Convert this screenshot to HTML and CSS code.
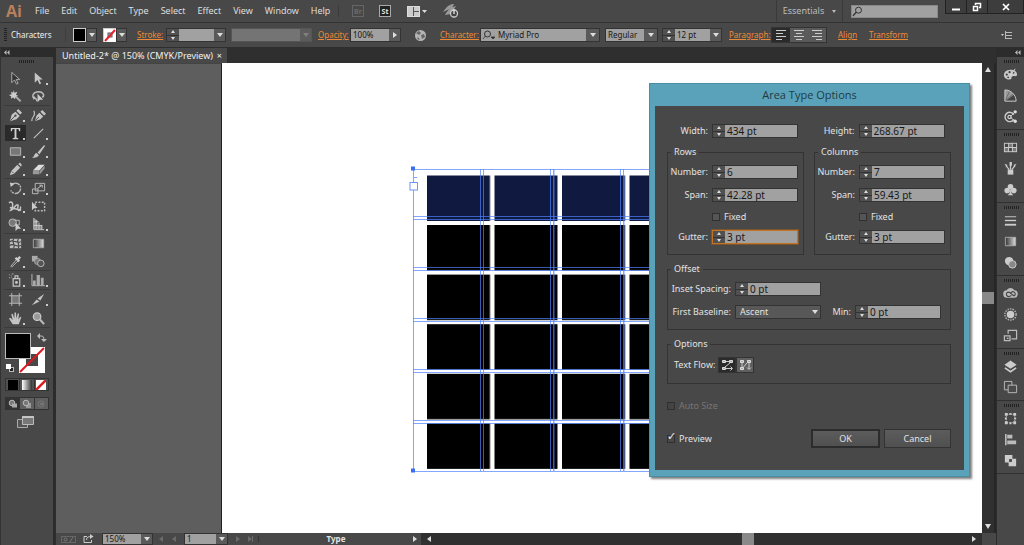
FILE: index.html
```html
<!DOCTYPE html>
<html lang="en">
<head>
<meta charset="utf-8">
<title>Untitled-2* - Area Type Options</title>
<link rel="stylesheet" href="styles.css">
</head>
<body>
<div class="app">
  <header class="menubar">
    <span class="logo">Ai</span>
    <nav class="menus">
      <a href="#">File</a><a href="#">Edit</a><a href="#">Object</a><a href="#">Type</a><a href="#">Select</a><a href="#">Effect</a><a href="#">View</a><a href="#">Window</a><a href="#">Help</a>
    </nav>
    <div class="bar-apps">
      <button class="app-chip dim">Br</button>
      <button class="app-chip">St</button>
      <button class="plain" aria-label="Arrange documents"><svg width="22" height="13" viewBox="0 0 22 13"><rect x="1" y="1" width="13" height="11" fill="#ccc"/><path d="M7.500 1v11M7.500 6.500H14" stroke="#555"/><path d="M1.500 1.500h12v10h-12z" fill="none" stroke="#ddd"/><path d="M16 5h5l-2.500 3z" fill="#ddd"/></svg></button>
      <button class="plain" aria-label="GPU performance"><svg width="16" height="16" viewBox="0 0 16 16"><path d="M0 9C4 3 7 1 11 1L9 5zM2 12C5 6 9 4 13 3L8 11z" fill="#999"/><circle cx="11" cy="10.500" r="3.500" fill="#444" stroke="#ccc" stroke-width="1.300"/><path d="M11 6v5" stroke="#ddd" stroke-width="1.400"/></svg></button>
    </div>
    <button class="workspace">Essentials<i class="tri down"></i></button>
    <label class="search"><svg width="11" height="11" viewBox="0 0 11 11"><circle cx="6.500" cy="4.200" r="3" fill="none" stroke="#333"/><path d="M4.300 6.300L1 9.800" stroke="#333" stroke-width="1.300"/></svg><input type="search" aria-label="Search"></label>
    <div class="winbuttons">
      <button aria-label="Minimize"><svg width="10" height="10" viewBox="0 0 10 10"><path d="M1 7.500h8" stroke="#fff" stroke-width="2"/></svg></button>
      <button aria-label="Restore"><svg width="10" height="10" viewBox="0 0 10 10"><path d="M3.500 3V1.500h5v4H7M1.500 4.500h4v4h-4z" fill="none" stroke="#fff" stroke-width="1.500"/></svg></button>
      <button aria-label="Close" class="wide"><svg width="10" height="10" viewBox="0 0 10 10"><path d="M2 2l6 6M8 2L2 8" stroke="#fff" stroke-width="1.700"/></svg></button>
    </div>
  </header>

  <section class="control" aria-label="Control">
    <i class="vgrip"></i>
    <span class="context">Characters</span>
    <div class="cell swatches">
      <button class="sw black" aria-label="Fill"></button><button class="dd" aria-label="Fill menu"></button>
      <button class="sw none second" aria-label="Stroke colour"><svg width="12" height="13" viewBox="0 0 12 13"><rect width="12" height="13" fill="#fff"/><rect x="4" y="4" width="4" height="4" fill="#9bb" stroke="#556"/><path d="M1 12L11 1" stroke="#e8202a" stroke-width="2"/></svg></button><button class="dd" aria-label="Stroke colour menu"></button>
    </div>
    <div class="cell stroke"><a href="#">Stroke:</a><span class="field"><span class="spin"><button aria-label="Up"></button><button aria-label="Down"></button></span><input class="w35" aria-label="Stroke weight"><button class="dd" aria-label="Stroke weights"></button></span></div>
    <div class="cell profile"><span class="field off"><input disabled class="w68" aria-label="Width profile"><button disabled class="dd" aria-label="Profiles"></button></span></div>
    <div class="cell opacity"><a href="#">Opacity:</a><span class="field"><input class="w38" value="100%" aria-label="Opacity"><button class="dd right" aria-label="Opacity slider"></button></span></div>
    <div class="cell recolor"><button class="plain" aria-label="Recolor artwork"><svg width="13" height="13" viewBox="0 0 13 13"><circle cx="6.500" cy="6.500" r="5.500" fill="#b5b5b5"/><path d="M2 4l3-2 2 2-2 2zM7 6l3-1 1 3-3 2zM4 8l2 3-3-1z" fill="#666"/></svg></button></div>
    <div class="cell char"><a href="#">Character:</a><span class="field"><span class="fontbox"><svg width="15" height="11" viewBox="0 0 15 11"><circle cx="6.500" cy="4" r="3" fill="none" stroke="#333"/><path d="M4.300 6L2 9M10 7h4l-2 2z" stroke="#333" fill="#333" stroke-width=".8"/></svg><input class="w88" value="Myriad Pro" aria-label="Font family"></span><button class="dd wide" aria-label="Fonts"></button></span></div>
    <div class="cell style"><span class="field"><input class="w38" value="Regular" aria-label="Font style"><button class="dd wide" aria-label="Styles"></button></span></div>
    <div class="cell size"><span class="field"><span class="spin"><button aria-label="Up"></button><button aria-label="Down"></button></span><input class="w35" value="12 pt" aria-label="Font size"><button class="dd" aria-label="Sizes"></button></span></div>
    <div class="cell para"><a href="#">Paragraph:</a><span class="aligns">
      <button class="on" aria-label="Align left"><svg width="12" height="12" viewBox="0 0 12 12"><path d="M1 1.500h10M1 4.500h7M1 7.500h10M1 10.500h6" stroke="#ccc"/></svg></button><button aria-label="Align center"><svg width="12" height="12" viewBox="0 0 12 12"><path d="M1 1.500h10M3 4.500h6M1 7.500h10M3 10.500h6" stroke="#ccc"/></svg></button><button aria-label="Align right"><svg width="12" height="12" viewBox="0 0 12 12"><path d="M1 1.500h10M4 4.500h7M1 7.500h10M5 10.500h6" stroke="#ccc"/></svg></button></span></div>
    <div class="cell align"><a href="#">Align</a></div>
    <div class="cell transform"><a href="#">Transform</a></div>
    <button class="plain panelmenu" aria-label="Panel menu"><svg width="12" height="10" viewBox="0 0 12 10"><path d="M0 4h3L1.500 6z" fill="#ccc"/><path d="M4.500 1v8M5 2.500h6M5 5.500h6M5 8.500h6" stroke="#bbb"/></svg></button>
  </section>

  <main class="work">
    <aside class="tools" aria-label="Tools">
      <div class="dockhead"><svg width="6" height="5" viewBox="0 0 6 5"><path d="M2.500 0v5L0 2.500zM5.500 0v5L3 2.500z" fill="#bbb"/></svg></div>
      <i class="hgrip"></i>
      <div class="toolset">
        <button aria-label="Selection"><svg viewBox="0 0 16 16"><path d="M4 1.500v11l3-3 2 4.500 1.800-.8-2-4.200h3.700z" fill="#333" stroke="#bbb" stroke-width=".9"/></svg></button>
        <button class="more" aria-label="Direct selection"><svg viewBox="0 0 16 16"><path d="M4 1.500v11l3-3 2 4.500 1.800-.8-2-4.200h3.700z" fill="#c4c4c4"/></svg></button>
        <button aria-label="Magic wand"><svg viewBox="0 0 16 16"><path d="M7 7l6.500 6" stroke="#aaa" stroke-width="2"/><path d="M6 1l1 3 3-1-1.500 3L11 7.500 8 8l-.5 3L5.500 9 3 10.500 3.500 8 1 6.500 4 5.500 3 3l2.500 1z" fill="#ccc"/></svg></button>
        <button aria-label="Lasso"><svg viewBox="0 0 16 16"><path d="M3.500 11C0 7 3 3 8 3s7 4 4 6M3 8c1 3 4 2 3 5" fill="none" stroke="#bbb" stroke-width="1.600"/><path d="M7 5v9l2.500-2.500H13z" fill="#ccc"/></svg></button>
      </div>
      <div class="toolset">
        <button class="more" aria-label="Pen"><svg viewBox="0 0 16 16"><path d="M2 14L4 7l4-3 4.500 4.500L9 12zM9 3l2-2 4 4-2 2z" fill="#c4c4c4"/><path d="M2.500 13.500l5-5" stroke="#444"/><circle cx="8" cy="8" r="1.200" fill="#444"/></svg></button>
        <button aria-label="Curvature"><svg viewBox="0 0 16 16"><path d="M4 14L6 8l3-3 4 4-3 3zM10 4l2-2 4 4-2 2z" fill="#c4c4c4"/><path d="M4.500 13.500l4-4" stroke="#444"/><path d="M1 14c-1-5 5-5 2-11" fill="none" stroke="#bbb" stroke-width="1.300"/></svg></button>
        <button class="more on" aria-label="Type"><svg viewBox="0 0 16 16"><path d="M3 2h10v3.500h-1L11 3.200H9v9.300l2 .5v1H5v-1l2-.5V3.200H5L4 5.500H3z" fill="#d0d0d0"/></svg></button>
        <button class="more" aria-label="Line segment"><svg viewBox="0 0 16 16"><path d="M3 13L13 3" stroke="#bbb" stroke-width="1.300"/></svg></button>
        <button class="more" aria-label="Rectangle"><svg viewBox="0 0 16 16"><path d="M2.500 4h11v8h-11z" fill="#777" stroke="#bbb"/></svg></button>
        <button class="more" aria-label="Paintbrush"><svg viewBox="0 0 16 16"><path d="M7 9L14 1l1 1-6 9z" fill="#c4c4c4"/><path d="M1 14c3 0 2-4 5-4.500L8.500 12C6 15 3 15 1 14z" fill="#c4c4c4"/></svg></button>
        <button class="more" aria-label="Pencil"><svg viewBox="0 0 16 16"><path d="M2 14l1.500-4.500L10 3l3 3-6.500 6.500zM11 2l1-1c1-.5 3 1.500 2.500 2.500L14 5z" fill="#c4c4c4"/><path d="M4 10l2 2" stroke="#555"/></svg></button>
        <button class="more" aria-label="Eraser"><svg viewBox="0 0 16 16"><path d="M2 9l6-6h6.500L9 9z" fill="#ddd"/><path d="M2 9.500h7v3.500H2zM9.500 9.500l5-5.500v3L9.500 13z" fill="#999"/></svg></button>
      </div>
      <div class="toolset">
        <button class="more" aria-label="Rotate"><svg viewBox="0 0 16 16"><path d="M4 4a5.500 5.500 0 1 1-1 6" fill="none" stroke="#bbb" stroke-width="1.500" stroke-dasharray="9 1 2 1"/><path d="M2 1.500l5 1.500-4 3.500z" fill="#ccc"/></svg></button>
        <button class="more" aria-label="Scale"><svg viewBox="0 0 16 16"><path d="M4.500 2.500h10v8h-10zM1.500 8.500h6v5h-6z" fill="none" stroke="#bbb"/><path d="M7 8l4-3M9 4.500h3V7" stroke="#ccc" fill="none"/></svg></button>
        <button class="more" aria-label="Width"><svg viewBox="0 0 16 16"><path d="M1 4c5-3 5 4 2 8 4-1 4-6 7-6 2 0-1 5 1 6s3-3 2-4M2 9l12 3" fill="none" stroke="#c4c4c4" stroke-width="1.600"/></svg></button>
        <button aria-label="Free transform"><svg viewBox="0 0 16 16"><path d="M4.500 3.500h10v9h-10z" fill="none" stroke="#bbb" stroke-width="1.500" stroke-dasharray="2 1.500"/><path d="M1 3v9l2.500-2.500H7z" fill="#ccc"/></svg></button>
        <button class="more" aria-label="Shape builder"><svg viewBox="0 0 16 16"><circle cx="5" cy="6" r="4" fill="#777" stroke="#bbb"/><path d="M7 3.500h5v5H7" fill="none" stroke="#bbb"/><path d="M8 6v9l2.500-2.500H14z" fill="#ccc"/></svg></button>
        <button class="more" aria-label="Perspective grid"><svg viewBox="0 0 16 16"><path d="M3 1l4 3v9H3zM7 8l5 2v3H3" fill="#888"/><path d="M3 1v12.500h11M5.500 3v10M8.500 6v7M11.500 9v4M3 5h5M3 9h9" fill="none" stroke="#ccc"/></svg></button>
      </div>
      <div class="toolset">
        <button aria-label="Mesh"><svg viewBox="0 0 16 16"><path d="M2 3h12v10H2z" fill="#bbb"/><path d="M2 6c4-3 7 3 12 0M2 10c4-3 7 3 12 0M6 3c-3 4 3 6 0 10M11 3c-3 4 3 6 0 10" fill="none" stroke="#444" stroke-width="1.200"/></svg></button>
        <button aria-label="Gradient"><svg viewBox="0 0 16 16"><defs><linearGradient id="lg"><stop offset="0" stop-color="#333"/><stop offset="1" stop-color="#ddd"/></linearGradient></defs><path d="M2.500 3.500h11v9h-11z" fill="url(#lg)" stroke="#aaa"/></svg></button>
        <button class="more" aria-label="Eyedropper"><svg viewBox="0 0 16 16"><path d="M3 13L9 6l1.500 1.500L4 14z" fill="none" stroke="#bbb"/><path d="M8 4l4 4M10 6l3-3" stroke="#ccc" stroke-width="2.500"/></svg></button>
        <button aria-label="Blend"><svg viewBox="0 0 16 16"><rect x="1" y="2" width="6" height="6" fill="#aaa"/><rect x="4" y="5" width="6" height="6" rx="2" fill="#777" stroke="#aaa"/><circle cx="10.500" cy="10" r="3.500" fill="#555" stroke="#bbb"/></svg></button>
      </div>
      <div class="toolset">
        <button class="more" aria-label="Symbol sprayer"><svg viewBox="0 0 16 16"><path d="M5.500 6h7v8h-7zM7.500 3h3v3h-3z" fill="none" stroke="#c4c4c4" stroke-width="1.300"/><circle cx="9" cy="10" r="1.500" fill="#ccc"/><path d="M1 2h1M3 3h1M1 5h1M4 1h2M3 5h1" stroke="#aaa"/></svg></button>
        <button class="more" aria-label="Column graph"><svg viewBox="0 0 16 16"><path d="M2 8h3v5H2zM6 2h3.500v11H6zM10.500 5h3v8h-3z" fill="#aaa"/><path d="M1 1v12.500h14" fill="none" stroke="#bbb"/></svg></button>
      </div>
      <div class="toolset">
        <button aria-label="Artboard"><svg viewBox="0 0 16 16"><path d="M4 4h8v8H4z" fill="#777"/><path d="M4 1v14M12 1v14M1 4h14M1 12h14" stroke="#bbb"/></svg></button>
        <button class="more" aria-label="Slice"><svg viewBox="0 0 16 16"><path d="M1 14L6 8l3 2zM7 7l7-5-4 7z" fill="#c4c4c4"/></svg></button>
      </div>
      <div class="toolset">
        <button class="more" aria-label="Hand"><svg viewBox="0 0 16 16"><path d="M5 14L1 8l1.500-.7L5 9.500 3.500 3.500 5 3l1.700 5L7 1.500h1.500L9 8l1.500-5.500 1.300.5L11 9l2-3 1.200.7L11.500 14z" fill="#c4c4c4"/></svg></button>
        <button aria-label="Zoom"><svg viewBox="0 0 16 16"><circle cx="6.500" cy="6" r="4" fill="#999" stroke="#ccc" stroke-width="1.300"/><path d="M9.500 9l4.500 5" stroke="#bbb" stroke-width="2.200"/></svg></button>
      </div>
      <svg class="fillstroke" width="44" height="42" viewBox="0 0 44 42" role="img" aria-label="Fill and stroke"><path d="M14 15h26v26H14zM21 22v12h12V22z" fill="#fff" fill-rule="evenodd"/><path d="M15 40L39 16" stroke="#e01820" stroke-width="2"/><rect x=".5" y="1.500" width="25" height="25" fill="#000" stroke="#bbb"/><path d="M34 4h3q2 0 2 4" fill="none" stroke="#bbb"/><path d="M35 1v6l-3-3zM36 7h6l-3 3z" fill="#bbb"/><rect x="4.500" y="35.500" width="4" height="4" fill="#222" stroke="#bbb"/><rect x="1" y="32" width="5" height="5" fill="#fff"/></svg>
      <div class="trio">
        <button aria-label="Color"><i class="chip black"></i></button><button aria-label="Gradient fill"><i class="chip grad"></i></button><button aria-label="None"><svg width="10" height="10" viewBox="0 0 10 10"><rect width="10" height="10" fill="#fff"/><path d="M0 10L10 0" stroke="#e01820" stroke-width="2.500"/></svg></button>
      </div>
      <div class="trio modes">
        <button class="on" aria-label="Draw normal"><svg width="10" height="10" viewBox="0 0 10 10"><circle cx="4" cy="4" r="2.800" fill="#777" stroke="#bbb"/><rect x="4" y="4.500" width="5" height="4" fill="#aaa"/></svg></button><button aria-label="Draw behind"><svg width="10" height="10" viewBox="0 0 10 10"><rect x="4" y="4" width="5" height="5" fill="#999"/><circle cx="4" cy="4" r="2.800" fill="#777" stroke="#bbb"/></svg></button><button aria-label="Draw inside"><svg width="10" height="10" viewBox="0 0 10 10"><circle cx="5" cy="5" r="3" fill="none" stroke="#777"/><rect x="4" y="4" width="3" height="2" fill="#777"/></svg></button>
      </div>
      <button class="plain screenmode" aria-label="Screen mode"><svg width="18" height="13" viewBox="0 0 18 13"><path d="M.5 3.500h10v8H.500z" fill="#555" stroke="#aaa"/><path d="M5.500.500h11v8h-11z" fill="#777" stroke="#bbb"/><path d="M5 1.200h12" stroke="#ccc" stroke-width="1.500"/></svg></button>
    </aside>

    <section class="document">
      <div class="tabs"><div class="tab"><span>Untitled-2* @ 150% (CMYK/Preview)</span><button class="plain" aria-label="Close tab">×</button></div></div>
      <div class="stage">
        <div class="pasteboard"></div>
        <div class="artboard">
          <svg class="art" width="500" height="312" viewBox="408 163 500 312" role="img" aria-label="Calendar grid">
            <defs>
              <pattern id="cells" x="427" y="225" width="67.500" height="49.600" patternUnits="userSpaceOnUse"><rect width="63" height="45.500" fill="#000"/></pattern>
              <pattern id="head" x="427" y="175" width="67.500" height="50" patternUnits="userSpaceOnUse"><rect width="63" height="46" fill="#10193f"/></pattern>
            </defs>
            <rect x="427" y="175.500" width="468" height="46" fill="url(#head)"/>
            <rect x="427" y="225" width="468" height="244" fill="url(#cells)"/>
            <g stroke="#4f80ff" stroke-opacity=".7" fill="none">
              <path d="M413 169.500H903M413 216.500H903M413 219.500H903M413 267.500H903M413 270.500H903M413 318.500H903M413 321.500H903M413 369.500H903M413 372.500H903M413 420.500H903M413 423.500H903M413 471.500H903"/>
              <path d="M413.500 169V471M480.500 169V471M483.500 169V471M550.500 169V471M553.500 169V471M620.500 169V471M623.500 169V471"/>
              <path d="M554.500 169V471M624.500 176V471" stroke-opacity=".35"/>
              <path d="M414 177.500h3"/>
            </g>
            <path d="M411 166.500h4v4h-4zM411 468.500h4v4h-4z" fill="#3a6ff0"/>
            <rect x="410" y="182.500" width="7.500" height="7.500" fill="#fff" stroke="#6d95f5"/>
          </svg>
        </div>
        <div class="vscroll"><i class="tri up"></i><i class="thumb"></i><i class="tri down"></i></div>
      </div>
      <footer class="status">
        <svg width="15" height="9" viewBox="0 0 15 9"><rect x=".5" y="1.500" width="14" height="6" fill="none" stroke="#666"/><circle cx="4.500" cy="4.500" r="1.500" fill="none" stroke="#777"/><path d="M9 7l3-5" stroke="#777"/></svg>
        <svg class="share" width="11" height="10" viewBox="0 0 11 10"><path d="M4 2.500H1v6h7.500V6M3.500 6c0-3 2-3.500 5-3.500" fill="none" stroke="#ccc"/><path d="M7 0l3.500 2.500L7 5z" fill="#ccc"/></svg>
        <span class="field"><input class="w38" value="150%" aria-label="Zoom level"><button class="dd" aria-label="Zoom levels"></button></span>
        <span class="nav first"><i class="bar"></i><i class="tri left"></i><i class="tri left"></i></span>
        <span class="field"><input class="w31" value="1" aria-label="Artboard number"><button class="dd" aria-label="Artboards"></button></span>
        <span class="nav last"><i class="tri rt"></i><i class="tri rt"></i><i class="bar"></i></span>
        <span class="current">Type</span>
        <i class="tri rt lit"></i>
        <div class="hscroll"><i class="tri left lit"></i><i class="thumb"></i><i class="tri rt lit"></i></div>
        <i class="corner"></i>
      </footer>
    </section>

    <aside class="dock" aria-label="Panels">
      <div class="dockhead"><svg width="6" height="5" viewBox="0 0 6 5"><path d="M2.500 0v5L0 2.500zM5.500 0v5L3 2.500z" fill="#bbb"/></svg></div>
      <div class="panels">
        <button aria-label="Color"><svg viewBox="0 0 16 16"><path d="M8 3C3 3 1 6 1 9s4 5 7 4c2-.5 0-2 2-3s5 1 5-2-3-5-7-5z" fill="#c8c8c8"/><g fill="#444"><circle cx="4" cy="8" r="1.200"/><circle cx="7" cy="5.500" r="1.200"/><circle cx="11" cy="6" r="1.200"/><circle cx="5.500" cy="11" r="1"/></g><path d="M8 9l5-7" stroke="#ddd"/></svg></button>
        <button aria-label="Color guide"><svg viewBox="0 0 16 16"><path d="M2 2v12h12C14 7 8 2 2 2z" fill="#999"/><path d="M2 14h12c0-3-1-5-2-7z" fill="#444"/><path d="M2 14L7 3.500M2 14l9-8" stroke="#666"/><path d="M2 2v12h12C14 7 8 2 2 2z" fill="none" stroke="#ccc"/></svg></button>
        <button aria-label="Color themes"><svg viewBox="0 0 16 16"><path d="M11.500 6a5 5 0 1 0 0 5" fill="none" stroke="#ccc" stroke-width="1.500"/><circle cx="7" cy="8.500" r="1.800" fill="none" stroke="#ccc" stroke-width="1.400"/><path d="M8 8l5-5M8 9l5 4" stroke="#ccc"/><circle cx="13" cy="3" r="1.800" fill="#ddd"/><circle cx="13" cy="13" r="1.800" fill="#ddd"/></svg></button>
      </div>
      <div class="panels">
        <button aria-label="Swatches"><svg viewBox="0 0 16 16"><path d="M1 3h14v10H1z" fill="#ccc"/><path d="M2 4h3.500v3.500H2zM10.500 4H14v3.500h-3.500zM6.500 8.500h3V12h-3z" fill="#444"/><path d="M6.500 4h3v3.500h-3zM2 8.500h3.500V12H2zM10.500 8.500H14V12h-3.500z" fill="#777"/></svg></button>
        <button aria-label="Brushes"><svg viewBox="0 0 16 16"><path d="M5 9h6v5.500H5z" fill="#ccc"/><path d="M6.500 9L3 5M8 9V2M9.500 9L13 5" stroke="#ccc" stroke-width="1.300"/><path d="M1.500 3l3 1v3zM7 1h2.500v4H7zM14.500 3l-3 1v3z" fill="#ccc"/></svg></button>
        <button aria-label="Symbols"><svg viewBox="0 0 16 16"><g fill="#ccc"><circle cx="8" cy="5" r="3"/><circle cx="4.500" cy="9" r="3"/><circle cx="11.500" cy="9" r="3"/><path d="M8 7l1 5 2 2H5l2-2z"/></g></svg></button>
      </div>
      <div class="panels">
        <button aria-label="Stroke panel"><svg viewBox="0 0 16 16"><path d="M2 4h12" stroke="#ccc"/><path d="M2 8h12" stroke="#ccc" stroke-width="1.500"/><path d="M2 12.500h12" stroke="#ccc" stroke-width="2"/></svg></button>
        <button aria-label="Gradient panel"><svg viewBox="0 0 16 16"><path d="M2.500 3.500h11v9h-11z" fill="url(#lg)" stroke="#aaa"/></svg></button>
        <button aria-label="Transparency"><svg viewBox="0 0 16 16"><circle cx="6.500" cy="6.500" r="4.500" fill="#ccc"/><circle cx="10" cy="10" r="4" fill="#888" stroke="#ccc"/></svg></button>
      </div>
      <div class="panels">
        <button aria-label="Libraries"><svg viewBox="0 0 16 16"><path d="M4.500 12.500a4 4 0 0 1-.5-8c2-3 6-3 8 0a4 4 0 0 1-.5 8z" fill="#bbb"/><path d="M9 10c-4 3-7-1-4.500-3S9 9 11 10s3-2 1-3.500S8.500 7 8 8" fill="none" stroke="#444" stroke-width="1.200"/></svg></button>
        <button aria-label="Appearance"><svg viewBox="0 0 16 16"><circle cx="8" cy="8" r="6" fill="none" stroke="#bbb" stroke-width="1.500" stroke-dasharray="1.500 1.200"/><circle cx="8" cy="8" r="4" fill="#ccc"/></svg></button>
        <button aria-label="Graphic styles"><svg viewBox="0 0 16 16"><path d="M5.500 6V2.500h9v9H9M1.500 8.500h6v5h-6zM4 11h2" fill="none" stroke="#bbb" stroke-width="1.300"/></svg></button>
      </div>
      <div class="panels">
        <button aria-label="Layers"><svg viewBox="0 0 16 16"><path d="M8 1.500L14.500 6 8 10.500 1.500 6z" fill="#ccc"/><path d="M2 9.500l6 4 6-4" fill="none" stroke="#ccc" stroke-width="1.800"/></svg></button>
        <button aria-label="Artboards panel"><svg viewBox="0 0 16 16"><path d="M1.500 1.500h8v9h-8z" fill="none" stroke="#bbb"/><path d="M5.500 5.500h9v8h-9z" fill="#4a4a4a" stroke="#bbb"/></svg></button>
      </div>
      <div class="panels">
        <button aria-label="Transform panel"><svg viewBox="0 0 16 16"><path d="M3.500 3.500h9v9h-9z" fill="none" stroke="#bbb" stroke-dasharray="1.500 1"/><path d="M2 2h3v3H2zM11 2h3v3h-3zM2 11h3v3H2zM11 11h3v3h-3zM7 2h2v2H7zM7 12h2v2H7zM2 7h2v2H2zM12 7h2v2h-2z" fill="#ccc"/></svg></button>
        <button aria-label="Align panel"><svg viewBox="0 0 16 16"><path d="M3 2v12" stroke="#ccc" stroke-width="1.500"/><path d="M4.500 3H10v4H4.500zM4.500 9H14v4H4.500z" fill="#bbb"/></svg></button>
        <button aria-label="Pathfinder"><svg viewBox="0 0 16 16"><path d="M2 2h8v4h4v8H6v-4H2z" fill="#ccc"/><path d="M6.500 6.500h3v3h-3z" fill="#444"/></svg></button>
      </div>
    </aside>

    <form class="dialog" role="dialog" aria-labelledby="dlg-title" onsubmit="return false">
      <h1 id="dlg-title">Area Type Options</h1>
      <div class="body">
        <div class="cols top">
          <div class="row"><label for="w">Width:</label><span class="field"><span class="spin"><button aria-label="Up"></button><button aria-label="Down"></button></span><input id="w" value="434 pt"></span></div>
          <div class="row"><label for="h">Height:</label><span class="field"><span class="spin"><button aria-label="Up"></button><button aria-label="Down"></button></span><input id="h" value="268.67 pt"></span></div>
        </div>
        <div class="cols">
          <fieldset><legend>Rows</legend>
            <div class="row"><label for="rn">Number:</label><span class="field"><span class="spin"><button aria-label="Up"></button><button aria-label="Down"></button></span><input id="rn" value="6"></span></div>
            <div class="row"><label for="rs">Span:</label><span class="field"><span class="spin"><button aria-label="Up"></button><button aria-label="Down"></button></span><input id="rs" value="42.28 pt"></span></div>
            <div class="row short"><span></span><label class="check"><input type="checkbox">Fixed</label></div>
            <div class="row"><label for="rg">Gutter:</label><span class="field focus"><span class="spin"><button aria-label="Up"></button><button aria-label="Down"></button></span><input id="rg" value="3 pt"></span></div>
          </fieldset>
          <fieldset><legend>Columns</legend>
            <div class="row"><label for="cn">Number:</label><span class="field"><span class="spin"><button aria-label="Up"></button><button aria-label="Down"></button></span><input id="cn" value="7"></span></div>
            <div class="row"><label for="cs">Span:</label><span class="field"><span class="spin"><button aria-label="Up"></button><button aria-label="Down"></button></span><input id="cs" value="59.43 pt"></span></div>
            <div class="row short"><span></span><label class="check"><input type="checkbox">Fixed</label></div>
            <div class="row"><label for="cg">Gutter:</label><span class="field"><span class="spin"><button aria-label="Up"></button><button aria-label="Down"></button></span><input id="cg" value="3 pt"></span></div>
          </fieldset>
        </div>
        <fieldset><legend>Offset</legend>
          <div class="row offset"><label for="inset">Inset Spacing:</label><span class="field"><span class="spin"><button aria-label="Up"></button><button aria-label="Down"></button></span><input id="inset" value="0 pt"></span></div>
          <div class="row offset"><label for="base">First Baseline:</label><span class="select"><select id="base"><option>Ascent</option><option>Cap Height</option><option>Leading</option></select></span><label for="min">Min:</label><span class="field"><span class="spin"><button aria-label="Up"></button><button aria-label="Down"></button></span><input id="min" value="0 pt"></span></div>
        </fieldset>
        <fieldset><legend>Options</legend>
          <div class="flow"><span>Text Flow:</span><span class="flowbtns"><button class="on" aria-label="By rows"><svg width="13" height="12" viewBox="0 0 13 12"><path d="M1.500 1.500h3v2h-3zM8.500 1.500h3v2h-3zM1.500 8.500h3v2h-3z" fill="#aaa" stroke="#ddd"/><path d="M5 2.500h3M9 4L4 8M5 9.500h6M9.500 7.500l2 2-2 2" fill="none" stroke="#ccc"/></svg></button><button aria-label="By columns"><svg width="13" height="12" viewBox="0 0 13 12"><path d="M1.500 1.500h3v2h-3zM8.500 1.500h3v2h-3zM1.500 8.500h3v2h-3z" fill="#aaa" stroke="#ddd"/><path d="M3 4v4M4.500 8L8 4M10 4v6M8 8.500l2 2 2-2" fill="none" stroke="#ccc"/></svg></button></span></div>
        </fieldset>
        <label class="check auto"><input type="checkbox" disabled>Auto Size</label>
        <div class="actions"><label class="check"><input type="checkbox" checked>Preview</label><button class="btn default">OK</button><button class="btn">Cancel</button></div>
      </div>
    </form>
  </main>
</div>
</body>
</html>
```
FILE: styles.css
```css
* { box-sizing: border-box; }
body { margin: 0; font: 9px/12px "Noto Sans", "Open Sans", sans-serif; color: #e2e2e2; background: #444; }
button, input, select { font: inherit; color: inherit; margin: 0; padding: 0; border: 0; border-radius: 0; background: none; }
button { display: flex; align-items: center; justify-content: center; flex: none; }
a { color: inherit; text-decoration: none; }
svg { display: block; flex: none; }
.app { display: grid; grid-template-rows: 22px 26px minmax(0, 1fr); height: 100vh; overflow: hidden; }

.tri { flex: none; width: 0; height: 0; border: 3px solid transparent; }
.tri.down { border-top: 4px solid #ddd; border-bottom: 0; }
.tri.up { border-bottom: 5px solid #ddd; border-top: 0; }
.tri.left { border-right: 4px solid #6a6a6a; border-left: 0; }
.tri.rt { border-left: 4px solid #6a6a6a; border-right: 0; }
.tri.left.lit { border-right-color: #ddd; }
.tri.rt.lit { border-left-color: #ddd; }

/* Menu bar */
.menubar { display: flex; align-items: center; background: #484848; padding-left: 6px; }
.logo { width: 29px; font: bold 16px/20px "Open Sans", sans-serif; color: #b87f5e; }
.menus { display: flex; gap: 12px; width: 304px; font-family: "Open Sans", sans-serif; border-right: 1px solid #3a3a3a; }
.bar-apps { display: flex; align-items: center; gap: 15px; flex: 1; padding-left: 13px; }
.app-chip { width: 12px; height: 12px; border: 1px solid #aaa; background: #222; font-size: 7px; font-weight: bold; line-height: 9px; }
.app-chip.dim { border-color: #666; background: #484848; color: #6a6a6a; }
.workspace { align-self: stretch; width: 67px; gap: 8px; border: 1px solid #3a3a3a; border-width: 0 1px; color: #bbb; }
.workspace .tri { border-width: 3px 2px 0; border-top-color: #bbb; }
.search { display: flex; align-items: center; width: 87px; height: 13px; margin: 0 7px 0 8px; background: #a0a0a0; border: 1px solid #888; }
.search input { flex: 1; min-width: 0; outline: 0; }
.winbuttons { display: flex; align-self: flex-start; background: #222; height: 14px; padding: 0 1px 1px; gap: 1px; }
.winbuttons button { width: 20px; background: #3d3d3d; }
.winbuttons .wide { width: 35px; }

/* Control bar */
.control { display: flex; align-items: center; background: #484848; border-top: 1px solid #333; border-bottom: 1px solid #2e2e2e; padding: 0 11px 0 4px; font-size: 8px; }
.control a { color: #ee8a35; text-decoration: underline; }
.vgrip { width: 3px; height: 14px; margin-right: 4px; background: repeating-linear-gradient(#222 0 1px, #484848 1px 2px); }
.context { width: 54px; color: #eee; }
.cell { display: flex; align-items: center; justify-content: space-between; flex: none; }
.swatches { width: 63px; padding-left: 7px; border-left: 1px solid #3d3d3d; justify-content: flex-start; }
.sw { width: 13px; height: 14px; border: 1px solid #ccc; }
.sw.black, .chip.black { background: #000; }
.second { margin-left: 6px; }
.stroke { width: 89px; margin-left: 9px; }
.profile { margin-left: 5px; }
.opacity { width: 83px; margin-left: 6px; }
.recolor { margin-left: 13px; }
.char { width: 160px; margin-left: 13px; }
.style { margin-left: 5px; }
.size { margin-left: 4px; }
.para { width: 97px; margin-left: 7px; }
.align { margin-left: 12px; }
.transform { margin-left: 12px; }
.panelmenu { margin-left: auto; }
.field { display: inline-flex; height: 14px; border: 1px solid #333; background: #333; color: #181818; }
.field input { flex: 1; min-width: 0; background: #a1a1a1; padding-left: 2px; outline: 0; }
.field input.w31 { flex: 0 0 31px; }
.field input.w35 { flex: 0 0 35px; }
.field input.w38 { flex: 0 0 38px; }
.field input.w68 { flex: 0 0 68px; }
.field input.w88 { flex: 0 0 88px; }
.field.off, .field.off input { background: #747474; }
.field.off { border-color: #555; }
.field.off .dd { background: #5c5c5c; }
.fontbox { display: flex; align-items: center; background: #a1a1a1; width: 105px; }
.dd { width: 11px; height: 100%; background: #5a5a5a; }
.swatches .dd { height: 14px; border: 1px solid #333; }
.dd.wide { width: 13px; }
.dd::before { content: ""; border: 3px solid transparent; border-top: 4px solid #ddd; border-bottom: 0; }
.dd.right::before { border: 3px solid transparent; border-left: 4px solid #ddd; border-right: 0; }
.dd:disabled::before { border-top-color: #808080; }
.spin { display: flex; flex-direction: column; width: 12px; gap: 1px; flex: none; }
.spin button { flex: 1; background: #505050; }
.spin button::before { content: ""; border: 2px solid transparent; border-bottom: 3px solid #ddd; border-top: 0; }
.spin button + button::before { border: 2px solid transparent; border-top: 3px solid #ddd; border-bottom: 0; }
.aligns { display: flex; height: 16px; border: 1px solid #333; background: #333; }
.aligns button { width: 18px; background: #5a5a5a; }
.aligns .on, .flowbtns .on { background: #2b2b2b; }

/* Work area */
.work { position: relative; display: grid; grid-template-columns: 56px minmax(0, 1fr) 28px; min-height: 0; }
.tools { background: #484848; border-right: 3px solid #2c2c2c; border-left: 1px solid #333; display: flex; flex-direction: column; overflow: hidden; }
.dockhead { flex: none; height: 9px; background: #2c2c2c; padding: 2px 3px; }
.hgrip { flex: none; width: 15px; height: 3px; margin: 3px auto 6px 18px; background: repeating-linear-gradient(90deg, #222 0 1px, #484848 1px 2px); }
.toolset { display: grid; grid-template-columns: 23px 23px; grid-auto-rows: 18px; margin: 0 3px; border-bottom: 1px solid #3a3a3a; }
.toolset:nth-of-type(7) { border-bottom-color: transparent; }
.toolset button { position: relative; margin: 1px; }
.toolset svg { width: 15px; height: 15px; }
.toolset .on { background: #2a2a2a; }
.more::after { content: ""; position: absolute; right: 1px; bottom: 1px; width: 2px; height: 2px; background: #ccc; }
.fillstroke { margin: 4px 0 4px 4px; }
.trio { display: grid; grid-template-columns: repeat(3, 1fr); width: 44px; height: 13px; margin: 0 0 6px 4px; background: #333; border: 1px solid #333; gap: 1px; }
.trio button { background: #505050; }
.trio .on { background: #333; }
.modes button { background: #606060; }
.chip { width: 10px; height: 10px; }
.grad { background: linear-gradient(90deg, #fff, #333); }
.screenmode { margin-left: 16px; align-self: flex-start; }

.document { display: grid; grid-template-rows: 15px minmax(0, 1fr) 12px; min-width: 0; min-height: 0; }
.tabs { display: flex; background: #2f2f2f; }
.tab { display: flex; align-items: center; justify-content: space-between; width: 171px; padding: 0 5px 0 6px; background: #484848; color: #f0f0f0; white-space: nowrap; }
.stage { display: grid; grid-template-columns: 166px minmax(0, 1fr) 14px; min-height: 0; }
.pasteboard { background: #5e5e5e; border-right: 1px solid #222; border-top: 1px solid #444; }
.artboard { background: #fff; overflow: hidden; }
.art { margin: 100px 0 0 186px; }
.vscroll { display: flex; flex-direction: column; align-items: center; justify-content: space-between; padding: 4px 2px 4px 0; background: #303030; border-right: 2px solid #262626; }
.vscroll { padding-right: 0; }
.vscroll .tri.down { border-top-width: 5px; }
.thumb { flex: none; width: 12px; height: 12px; background: #898989; }
.status { display: flex; align-items: center; background: #484848; padding-left: 5px; font-size: 8px; min-width: 0; }
.status .field { height: 12px; }
.share { margin: 0 8px 0 7px; }
.nav { display: flex; align-items: center; }
.bar { width: 1px; height: 6px; background: #6a6a6a; }
.nav.first { width: 31px; padding: 0 8px 0 6px; }
.nav.first .tri + .tri { margin-left: 9px; }
.nav.last { width: 31px; padding-left: 8px; border-right: 1px solid #333; }
.nav.last .tri + .tri { margin-left: 8px; }
.current { flex: 0 0 154px; text-align: center; font-weight: bold; }
.hscroll { flex: 1; align-self: stretch; display: flex; align-items: center; margin-left: 4px; padding: 0 6px; justify-content: space-between; background: #303030; }
.hscroll .thumb { margin-left: 92px; }
.corner { width: 14px; }

.dock { background: #484848; border-left: 1px solid #2c2c2c; }
.dock .dockhead { display: flex; justify-content: flex-end; }
.panels { border-bottom: 1px solid #303030; padding: 7px 6px 2px; background: repeating-linear-gradient(90deg, #222 0 1px, #484848 1px 2px) 7px 3px / 15px 3px no-repeat; }
.panels button { width: 15px; height: 21px; }
.panels svg { width: 15px; height: 15px; }

/* Dialog */
.dialog { position: absolute; left: 649px; top: 35px; width: 321px; background: #5aa2b9; border: 1px solid #478da4; padding: 0 5px 6px; box-shadow: 2px 2px 2px rgba(0, 0, 0, .5); }
.dialog h1 { margin: 0; font: 11px/22px "Open Sans", sans-serif; text-align: center; color: #1f3b45; }
.body { display: flex; flex-direction: column; gap: 8px; background: #484848; padding: 18px 13px 22px 12px; }
.cols { display: grid; grid-template-columns: 1fr 1fr; gap: 10px; }
.cols.top { padding-left: 1px; }
fieldset { margin: 0; min-width: 0; border: 1px solid #333; padding: 7px 0 10px; display: flex; flex-direction: column; gap: 9px; }
legend { margin-left: 3px; padding: 0 3px; }
.row { display: grid; grid-template-columns: 40px 86px; column-gap: 4px; align-items: center; height: 14px; white-space: nowrap; }
.row.short { height: 10px; }
.row > label:not(.check) { text-align: right; }
.row .field { width: 86px; font-size: 10px; }
.focus { border-color: #c27422; outline: 1px solid #7a5530; }
.row.offset { grid-template-columns: 63px 86px 26px 86px; }
.check { display: flex; align-items: center; gap: 4px; }
.check input { appearance: none; flex: none; width: 8px; height: 8px; background: #555; border: 1px solid #303030; }
.check input:checked { background: none; display: flex; align-items: center; }
.check input:checked::before { content: "✓"; font: bold 11px/8px "DejaVu Sans", sans-serif; color: #eee; margin: -4px 0 0 -1px; }
.auto { margin-top: 7px; height: 14px; color: #777; }
.auto input { background: #444; }
.select { position: relative; display: flex; align-items: center; height: 14px; border: 1px solid #333; background: #585858; }
.select select { appearance: none; width: 100%; padding-left: 4px; }
.select::after { content: ""; position: absolute; right: 2px; border: 3px solid transparent; border-top: 4px solid #ddd; border-bottom: 0; }
.flow { display: flex; align-items: center; gap: 3px; padding-left: 6px; height: 16px; }
.flowbtns { display: flex; }
.flowbtns button { width: 18px; height: 16px; background: #606060; border: 1px solid #333; }
.actions { display: flex; gap: 4px; margin-top: 8px; height: 19px; }
.actions .check { margin-right: auto; }
.btn { width: 67px; background: linear-gradient(#5c5c5c, #505050); border: 1px solid #333; }
.btn.default { width: 69px; border: 2px solid #2c2c2c; }
```
